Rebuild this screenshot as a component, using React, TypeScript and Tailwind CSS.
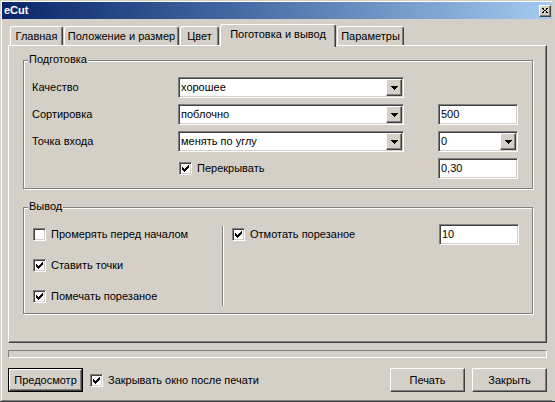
const FONT = "font-['Liberation_Sans',Arial,sans-serif]"
const SUNKEN =
  'border border-t-[#808080] border-l-[#808080] border-r-white border-b-white shadow-[inset_1px_1px_0_#404040,inset_-1px_-1px_0_#d4d0c8] bg-white'
const RAISED =
  'border border-t-white border-l-white border-r-[#404040] border-b-[#404040] shadow-[inset_-1px_-1px_0_#808080] bg-[#d4d0c8]'
const ETCHED = 'border border-[#808080] shadow-[1px_1px_0_#fff,inset_1px_1px_0_#fff]'

function CheckMark() {
  return (
    <svg width="7" height="7" viewBox="0 0 7 7" shapeRendering="crispEdges">
      <path
        d="M0 2h1v3h-1z M1 3h1v3h-1z M2 4h1v3h-1z M3 3h1v3h-1z M4 2h1v3h-1z M5 1h1v3h-1z M6 0h1v3h-1z"
        fill="#000"
      />
    </svg>
  )
}

function Check({ label, checked }: { label: string; checked: boolean }) {
  return (
    <div className="flex items-center gap-[5px]">
      <div className={`${SUNKEN} flex h-[13px] w-[13px] shrink-0 items-center justify-center`}>
        {checked ? <CheckMark /> : null}
      </div>
      <span className="whitespace-nowrap leading-[13px]">{label}</span>
    </div>
  )
}

function Arrow() {
  return (
    <svg width="7" height="4" viewBox="0 0 7 4" shapeRendering="crispEdges">
      <path d="M0 0h7v1h-1v1h-1v1h-1v1h-1v-1h-1v-1h-1v-1h-1z" fill="#000" />
    </svg>
  )
}

function Combo({ value, className = '' }: { value: string; className?: string }) {
  return (
    <div className={`${SUNKEN} flex h-[21px] items-center p-px ${className}`}>
      <span className="flex-1 truncate pl-px">{value}</span>
      <div className={`${RAISED} flex h-[17px] w-[16px] items-center justify-center`}>
        <Arrow />
      </div>
    </div>
  )
}

function Field({ value, className = '' }: { value: string; className?: string }) {
  return (
    <div className={`${SUNKEN} flex h-[21px] items-center pl-[2px] ${className}`}>
      {value}
    </div>
  )
}

function Group({
  title,
  className,
  children,
}: {
  title: string
  className: string
  children: React.ReactNode
}) {
  return (
    <div className={`relative ${ETCHED} ${className}`}>
      <span className="absolute left-[4px] top-[-8px] bg-[#d4d0c8] px-px leading-[13px]">
        {title}
      </span>
      {children}
    </div>
  )
}

const TABS = [
  { label: 'Главная', w: 'w-[53px]' },
  { label: 'Положение и размер', w: 'w-[115px]' },
  { label: 'Цвет', w: 'w-[39px]' },
  { label: 'Поготовка и вывод', w: 'w-[116px]', selected: true },
  { label: 'Параметры', w: 'w-[67px]' },
]

function Button({ label, primary }: { label: string; primary?: boolean }) {
  return (
    <div className={`h-[24px] w-[75px] ${primary ? 'border border-black' : ''}`}>
      <div className={`${RAISED} flex h-full w-full items-center justify-center`}>
        {label}
      </div>
    </div>
  )
}

export default function App() {
  return (
    <div
      className={`${FONT} h-[402px] w-[555px] overflow-hidden border-b border-b-[#404040] bg-[#d4d0c8] pl-px pr-[3px] pt-px text-[11px] text-black`}
    >
      <div className="flex h-full flex-col border-b border-l border-t border-b-[#808080] border-l-white border-t-white">
        {/* title bar */}
        <div className="flex h-[17px] shrink-0 items-center justify-between bg-gradient-to-r from-[#0a246a] to-[#a6caf0] pl-[2px] pr-[1px]">
          <span className="text-[11px] font-bold text-white">eCut</span>
          <div className={`${RAISED} flex h-[12px] w-[12px] items-center justify-center`}>
            <svg width="6" height="5" viewBox="0 0 6 5" shapeRendering="crispEdges">
              <path
                d="M0 0h2v1h-2z M4 0h2v1h-2z M1 1h1v1h-1z M4 1h1v1h-1z M2 2h2v1h-2z M1 3h1v1h-1z M4 3h1v1h-1z M0 4h2v1h-2z M4 4h2v1h-2z"
                fill="#000"
              />
            </svg>
          </div>
        </div>

        <div className="flex flex-col pl-[6px] pr-[5px]">
          {/* tabs */}
          <div className="mt-[5px] flex h-[21px] items-end gap-px pl-[2px]">
            {TABS.map((t) => (
              <div
                key={t.label}
                className={`${t.w} flex items-center justify-center rounded-t-[3px] border-l border-r border-t border-l-white border-r-[#404040] border-t-white bg-[#d4d0c8] shadow-[inset_-1px_0_0_#808080] ${
                  t.selected ? 'relative z-10 -mb-[2px] h-[23px] pb-[3px]' : 'h-[19px]'
                }`}
              >
                <span className="whitespace-nowrap">{t.label}</span>
              </div>
            ))}
          </div>

          {/* panel */}
          <div className="flex h-[298px] flex-col border border-b-[#404040] border-l-white border-r-[#404040] border-t-white pl-[14px] pr-[13px] pt-[14px] shadow-[inset_-1px_-1px_0_#808080]">
            <Group title="Подготовка" className="h-[129px] pl-[8px] pt-[16px]">
              <div className="grid grid-cols-[146px_226px_34px_80px] grid-rows-[21px_21px_21px_21px] gap-y-[6px]">
                <div className="flex items-center">Качество</div>
                <Combo value="хорошее" />
                <div />
                <div />

                <div className="flex items-center">Сортировка</div>
                <Combo value="поблочно" />
                <div />
                <Field value="500" />

                <div className="flex items-center">Точка входа</div>
                <Combo value="менять по углу" />
                <div />
                <Combo value="0" />

                <div />
                <div className="flex items-center pl-px">
                  <Check label="Перекрывать" checked />
                </div>
                <div />
                <Field value="0,30" />
              </div>
            </Group>

            <Group title="Вывод" className="mt-[18px] flex h-[107px] pt-[16px]">
              <div className="flex w-[198px] flex-col gap-[11px] pl-[9px]">
                <div className="flex h-[20px] items-center">
                  <Check label="Промерять перед началом" checked={false} />
                </div>
                <div className="flex h-[20px] items-center">
                  <Check label="Ставить точки" checked />
                </div>
                <div className="flex h-[20px] items-center">
                  <Check label="Помечать порезаное" checked />
                </div>
              </div>
              <div className="mt-[2px] h-[80px] w-[2px] border-l border-r border-l-[#808080] border-r-white" />
              <div className="flex flex-1 flex-col pl-[8px]">
                <div className="flex h-[21px] items-center justify-between pr-[13px]">
                  <Check label="Отмотать порезаное" checked />
                  <Field value="10" className="w-[80px]" />
                </div>
              </div>
            </Group>
          </div>

          {/* bar */}
          <div className="mt-[7px] h-[8px] border border-b-white border-l-[#808080] border-r-white border-t-[#808080]" />

          {/* buttons */}
          <div className="mt-[10px] flex h-[24px] items-center">
            <Button label="Предосмотр" primary />
            <div className="ml-[7px]">
              <Check label="Закрывать окно после печати" checked />
            </div>
            <div className="flex-1" />
            <div className="flex gap-[7px]">
              <Button label="Печать" />
              <Button label="Закрыть" />
            </div>
          </div>
        </div>
      </div>
    </div>
  )
}
